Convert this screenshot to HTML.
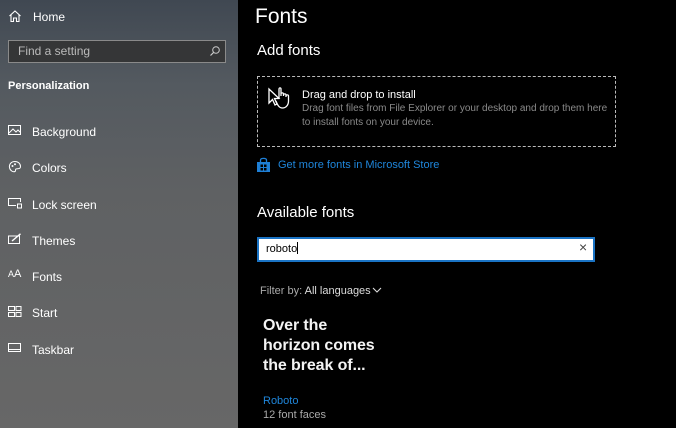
<!DOCTYPE html><html><head><style>
body{margin:0;width:676px;height:428px;overflow:hidden;background:#000;font-family:"Liberation Sans",sans-serif;position:relative}
.side{position:absolute;left:0;top:0;width:238px;height:428px;background:linear-gradient(180deg,#404852 0%,#545a60 20%,#5f6163 45%,#676767 100%);color:#fff}
.a{position:absolute;font-size:12px;color:#fff}
.ic{position:absolute;left:8px}
.t{position:absolute;color:#fff}
</style></head><body>
<div class="side">
<svg class="ic" style="top:9px" width="14" height="14" viewBox="0 0 14 14"><path d="M1.5 7 L7 2 L12.5 7 M3 5.8 V12.5 H5.5 V9 H8.5 V12.5 H11 V5.8" fill="none" stroke="#fff" stroke-width="1.1"/></svg>
<div class="a" style="left:33px;top:10px;font-size:12px">Home</div>
<div style="position:absolute;left:8px;top:40px;width:216px;height:21px;border:1px solid #8a8a8a;background:#353637"></div>
<div class="a" style="left:18px;top:44px;color:#bbb;font-size:12px">Find a setting</div>
<svg class="ic" style="left:209px;top:45px" width="12" height="12" viewBox="0 0 12 12"><circle cx="7" cy="5" r="3.3" fill="none" stroke="#ccc" stroke-width="1"/><path d="M4.6 7.4 L1.5 10.5" stroke="#ccc" stroke-width="1.2"/></svg>
<div class="a" style="left:8px;top:80px;font-weight:bold;font-size:11px">Personalization</div>
<svg class="ic" style="top:124px" width="14" height="12" viewBox="0 0 14 12"><rect x="0.5" y="1.5" width="12" height="9" fill="none" stroke="#fff"/><path d="M1 9 L5 5 L8 8 L10 6 L12.5 8.5" fill="none" stroke="#fff"/></svg>
<div class="a" style="left:32px;top:125px">Background</div>
<svg class="ic" style="top:160px" width="14" height="14" viewBox="0 0 14 14"><path d="M7 1.5 C3 1.5 1 4.5 1.5 7.5 C2 10.5 5 12.5 7 11.5 C8 11 7 9.5 8 9 C9.5 8.3 12.5 9.5 12.5 6.5 C12.5 3.5 10 1.5 7 1.5Z" fill="none" stroke="#fff"/><circle cx="4.5" cy="6" r="1" fill="#fff"/><circle cx="7" cy="4.3" r="1" fill="#fff"/></svg>
<div class="a" style="left:32px;top:161px">Colors</div>
<svg class="ic" style="top:197px" width="14" height="12" viewBox="0 0 14 12"><path d="M8 8.5 H0.5 V1.5 H12.5 V5" fill="none" stroke="#fff"/><rect x="9.5" y="7" width="4" height="4" fill="none" stroke="#fff"/></svg>
<div class="a" style="left:32px;top:198px">Lock screen</div>
<svg class="ic" style="top:233px" width="14" height="12" viewBox="0 0 14 12"><rect x="0.5" y="3" width="11" height="7.5" fill="none" stroke="#fff"/><path d="M4 8 L12.5 0.8" stroke="#fff" stroke-width="1.4"/></svg>
<div class="a" style="left:32px;top:234px">Themes</div>
<div class="a" style="left:8px;top:268px;font-size:9px">A<span style="font-size:11px">A</span></div>
<div class="a" style="left:32px;top:270px">Fonts</div>
<svg class="ic" style="top:306px" width="14" height="12" viewBox="0 0 14 12"><rect x="0.5" y="0.5" width="6" height="4" fill="none" stroke="#fff"/><rect x="8" y="0.5" width="5" height="4" fill="none" stroke="#fff"/><rect x="0.5" y="6.5" width="6" height="4" fill="none" stroke="#fff"/><rect x="8" y="6.5" width="5" height="4" fill="none" stroke="#fff"/></svg>
<div class="a" style="left:32px;top:306px">Start</div>
<svg class="ic" style="top:343px" width="14" height="10" viewBox="0 0 14 10"><rect x="0.5" y="0.5" width="12" height="8" fill="none" stroke="#fff"/><path d="M1 6.5 H12" stroke="#fff"/></svg>
<div class="a" style="left:32px;top:343px">Taskbar</div>
</div>
<div class="t" style="left:255px;top:5px;font-size:21px">Fonts</div>
<div class="t" style="left:257px;top:42px;font-size:15px">Add fonts</div>
<div style="position:absolute;left:257px;top:76px;width:357px;height:69px;border:1px dashed #bbb"></div>
<svg style="position:absolute;left:267px;top:86px" width="26" height="24" viewBox="0 0 26 24"><path d="M2 3 L2 17 L5.5 13.5 L8 19 L10 18 L7.5 12.5 L12 12.5Z" fill="#000" stroke="#fff" stroke-width="1.3"/><path d="M12 12 V3 C12 1.5 14 1.5 14 3 V10 M14 8 C14 6.5 16.5 6.5 16.5 8 V10 M16.5 9 C16.5 7.5 19 7.5 19 9 V11 M19 10 C19 8.5 21.5 8.5 21.5 10 V15 C21.5 19 19 22 15.5 22 C12 22 10.5 19 9 15" fill="#000" stroke="#fff" stroke-width="1.3"/></svg>
<div class="t" style="left:302px;top:89px;font-size:11px">Drag and drop to install</div>
<div class="t" style="left:302px;top:102px;width:310px;font-size:10px;color:#8a8a8a;line-height:14px;white-space:nowrap">Drag font files from File Explorer or your desktop and drop them here<br>to install fonts on your device.</div>
<svg style="position:absolute;left:256px;top:157px" width="15" height="16" viewBox="0 0 15 16"><path d="M1 5 H14 V15 H1Z" fill="#1e7fd6"/><path d="M4.5 5 V3 C4.5 0.8 10.5 0.8 10.5 3 V5" fill="none" stroke="#1e7fd6" stroke-width="1.3"/><rect x="4.5" y="7.5" width="2.5" height="2.5" fill="#000"/><rect x="8" y="7.5" width="2.5" height="2.5" fill="#000"/><rect x="4.5" y="11" width="2.5" height="2.5" fill="#000"/><rect x="8" y="11" width="2.5" height="2.5" fill="#000"/></svg>
<div class="t" style="left:278px;top:159px;font-size:11px;color:#1f86db">Get more fonts in Microsoft Store</div>
<div class="t" style="left:257px;top:204px;font-size:15px">Available fonts</div>
<div style="position:absolute;left:257px;top:237px;width:334px;height:21px;background:#fff;border:2px solid #1a73c4"></div>
<div class="t" style="left:266px;top:242px;font-size:11px;color:#000">roboto<span style="display:inline-block;width:1px;height:12px;background:#000;vertical-align:-2px"></span></div>
<div class="t" style="left:579px;top:239px;font-size:14px;color:#444">×</div>
<div class="t" style="left:260px;top:285px;font-size:11px;color:#aaa">Filter by: <span style="color:#ddd">All languages</span></div>
<svg style="position:absolute;left:372px;top:287px" width="10" height="7" viewBox="0 0 10 7"><path d="M1 1 L5 5 L9 1" fill="none" stroke="#ddd" stroke-width="1.1"/></svg>
<div class="t" style="left:263px;top:316px;font-size:16px;line-height:20px;font-weight:bold;letter-spacing:-0.1px;color:#f4f4f4">Over the<br>horizon comes<br>the break of...</div>
<div class="t" style="left:263px;top:395px;font-size:11px;color:#1f86db">Roboto</div>
<div class="t" style="left:263px;top:409px;font-size:11px;color:#aaa">12 font faces</div>
</body></html>
